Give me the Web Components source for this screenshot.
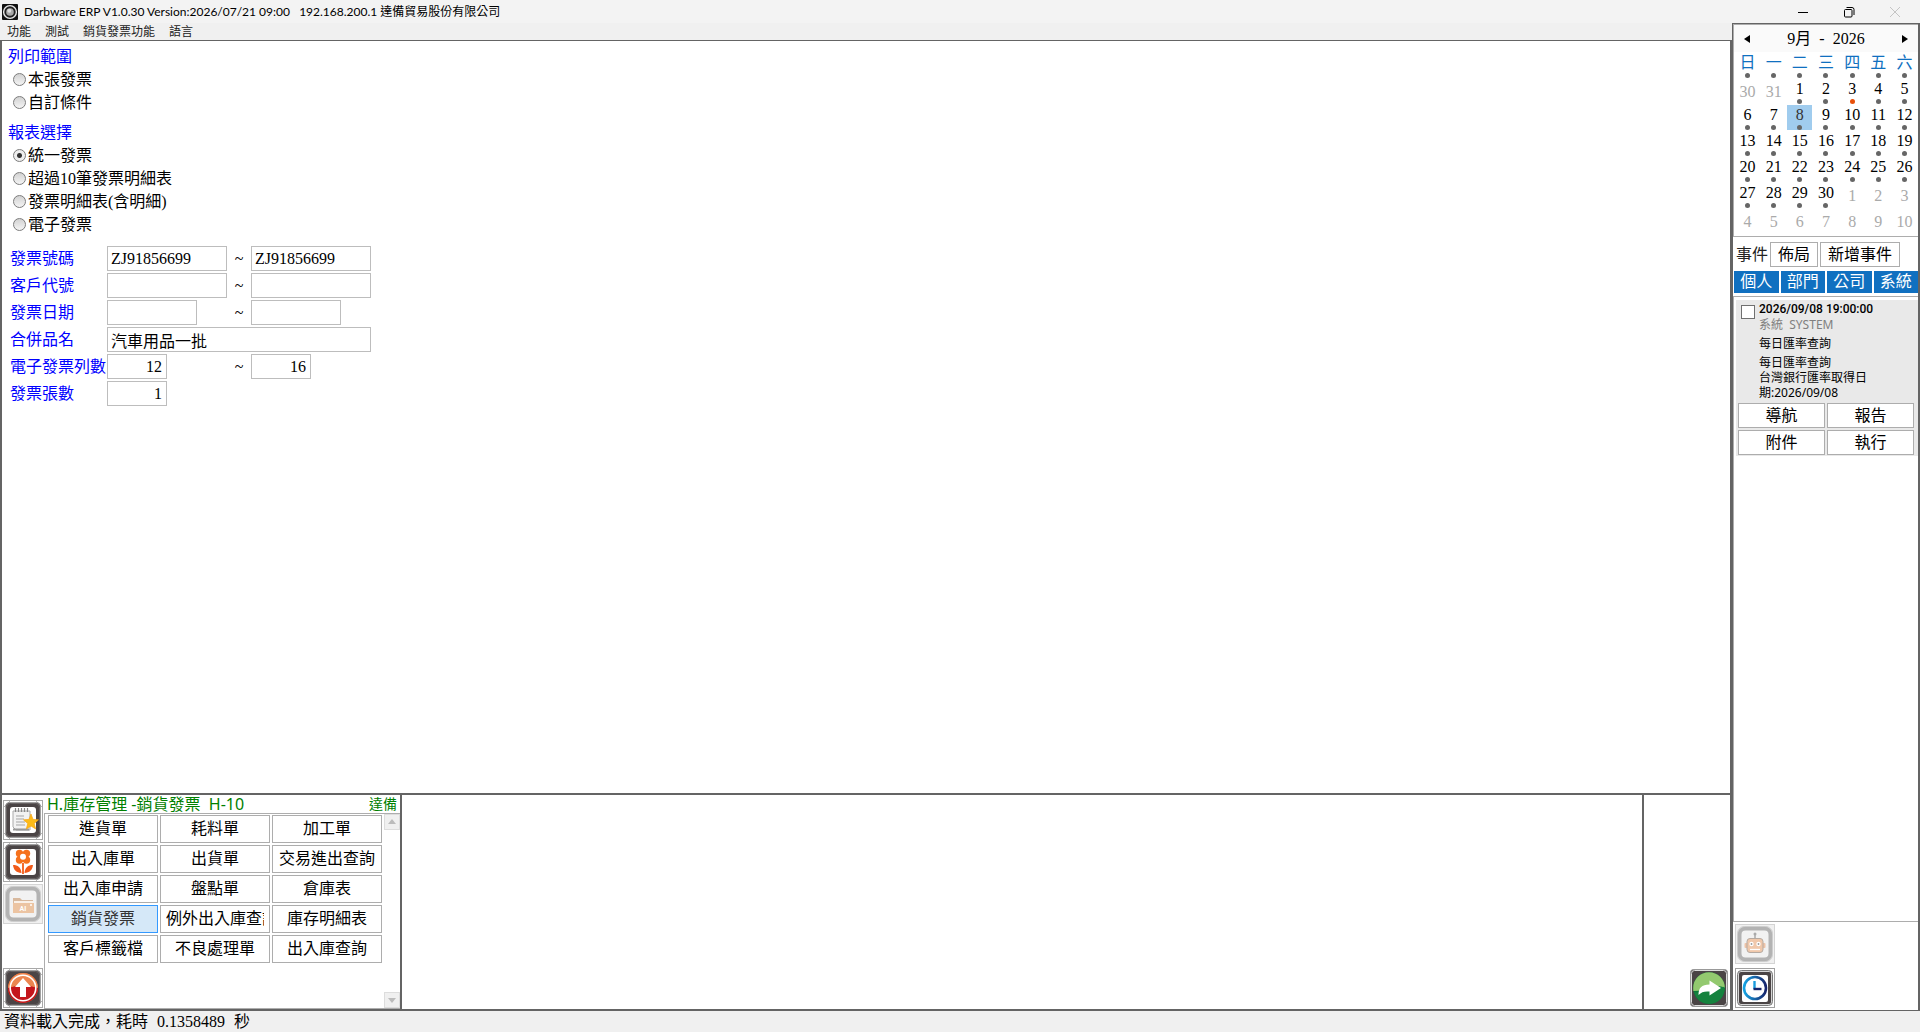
<!DOCTYPE html>
<html lang="zh-Hant">
<head>
<meta charset="utf-8">
<title>Darbware ERP</title>
<style>
  html, body {height: 100%; margin: 0;}
  body {
    --ming: "Liberation Serif", "Noto Sans CJK TC", serif;
    --ui: "Noto Sans", "Noto Sans CJK TC", sans-serif;
    --line: #646464;
    --edge: #adadad;
    --chrome: #f0f0f0;
    background: #fff;
    color: #000;
    font: 400 16px/20px var(--ming);
    overflow: hidden;
  }
</style>
</head>
<body>
<erp-app></erp-app>

<script>
// Attaches an open shadow root filled with the given markup
function shadow(el, html) {
  const template = document.createElement('template');
  template.innerHTML = `<style>* {box-sizing: border-box;} button, input {font: inherit; color: inherit;}</style>${html}`;
  el.attachShadow({mode: 'open'});
  el.shadowRoot.appendChild(template.content.cloneNode(true));
}

///////////////////
// Icons
const darkFrame = `
  <rect x=".5" y=".5" width="39" height="39" fill="#fff" stroke="#a8a8a8"/>
  <path d="M1 7L7 1M33 1L39 7M1 33L7 39M33 39L39 33" stroke="#b8b8b8" stroke-width="1"/>
  <rect x="2.5" y="2.5" width="35" height="35" rx="4" fill="#4a4445" stroke="#a0a0a0"/>
  <rect x="3.5" y="3.5" width="33" height="33" rx="4" fill="none" stroke="#666162"/>`;
const paleFrame = `
  <rect x=".5" y=".5" width="39" height="39" fill="#f0f0f0" stroke="#d4d4d4"/>
  <rect x="4.5" y="4.5" width="31" height="31" rx="6" fill="#f2f2f2" stroke="#b3b3b3" stroke-width="4"/>
  <rect x="2.5" y="2.5" width="35" height="35" rx="7" fill="none" stroke="#cdcdcd"/>`;

const icons = {
  logo: `<rect width="16" height="16" rx="1" fill="#111"/>
    <circle cx="8" cy="8" r="6.4" fill="#222" stroke="#e8e8e8" stroke-width="1.4"/>
    <circle cx="8" cy="8" r="3.8" fill="#a9a9a9"/><circle cx="7.3" cy="6.8" r="2" fill="#dedede"/>`,
  note: `${darkFrame}<rect x="7" y="7" width="26" height="26" rx="3" fill="#fff"/>
    <path d="M10 11h17v19H13l-3-3z" fill="#f2f2f2" stroke="#aaa"/>
    <path d="M10 29.500h16" stroke="#999" stroke-width="2"/>
    <path d="M12.500 8v4M15.500 8v4M18.500 8v4M21.500 8v4M24.500 8v4" stroke="#888" stroke-width="1.2"/>
    <path d="M13 16h8M13 19h8M13 22h9M13 25h9" stroke="#a5a5a5"/>
    <path d="M28 14l2 5.400 5.500.4-4.300 3.700 1.500 5.500-4.700-3-4.700 3 1.500-5.500-4.300-3.700 5.500-.4z" fill="#fdbb18" stroke="#f6a313" stroke-width=".7"/>`,
  flower: `${darkFrame}<rect x="7" y="7" width="26" height="26" rx="3" fill="#fff"/>
    <g fill="#f5711c"><circle cx="16.500" cy="11.500" r="3.700"/><circle cx="23.500" cy="11.500" r="3.700"/>
    <circle cx="16.500" cy="18" r="3.700"/><circle cx="23.500" cy="18" r="3.700"/><rect x="15" y="10" width="10" height="10"/></g>
    <circle cx="20" cy="14.700" r="3" fill="#fff"/>
    <path d="M20 21v11" stroke="#f25c18" stroke-width="1.800"/>
    <path d="M10 23c5 0 8 2.500 8.500 8-5-.3-8-3-8.500-8zM30 23c-5 0-8 2.500-8.500 8 5-.3 8-3 8.500-8z" fill="#f15b1b"/>`,
  folder: `${paleFrame}<path d="M10 14h7l2 2h11v13H10z" fill="#d8b99e"/>
    <path d="M11 17h19v2H11z" fill="#faf1e8"/><path d="M10 19h21v10H10z" fill="#ecc4a2"/>
    <text x="20" y="27" text-anchor="middle" fill="#fff" font-family="Roboto" font-size="7" font-weight="700">AI</text>
    <circle cx="28" cy="21" r="1" fill="#fff"/>`,
  up: `${darkFrame}<circle cx="20" cy="20" r="15" fill="#e0541f"/>
    <path d="M5 20a15 15 0 0 1 30 0q-15-5-30 0z" fill="#ec8650"/><path d="M5 20q15-5 30 0a15 15 0 0 1-30 0z" fill="#c4161c"/>
    <circle cx="20" cy="20" r="12.800" fill="none" stroke="#fff" stroke-width="1.600"/>
    <path d="M20 10l8 9h-5v10h-6V19h-5z" fill="#fff"/>`,
  go: `<rect x="1.500" y="1.500" width="37" height="37" rx="3" fill="#4a4445" stroke="#999"/>
    <rect x="2.500" y="2.500" width="35" height="35" rx="3" fill="none" stroke="#dcdcdc"/>
    <circle cx="20" cy="20" r="15.800" fill="#087c38"/>
    <path d="M4.200 20a15.800 15.800 0 0 1 31.600 0q-5-3-11-1-10 4-20.500 4z" fill="#93c96f"/>
    <path d="M5 24q10 2 18-4 5-2 12.500-1v3q-2 13-15.500 14-12-1-15-12z" fill="#15823e"/>
    <path d="M9.500 27c0-7 3-10.500 11-10.500V12.500L32 20l-11.500 7.500v-4c-5-.5-8 .5-11 3.500z" fill="#fff"/>`,
  robot: `${paleFrame}<path d="M20 10v5" stroke="#aaa" stroke-width="1.500"/><circle cx="20" cy="10" r="1.500" fill="#aaa"/>
    <rect x="9.500" y="19" width="21" height="5" rx="1" fill="#efc4a8"/>
    <rect x="12" y="14.500" width="16" height="14" rx="3" fill="#f0c8ab" stroke="#b5aaa2"/>
    <circle cx="16.500" cy="20" r="2.200" fill="#fff"/><circle cx="23.500" cy="20" r="2.200" fill="#fff"/>
    <circle cx="16.500" cy="20" r=".9" fill="#999"/><circle cx="23.500" cy="20" r=".9" fill="#999"/>
    <path d="M15 25.500h10" stroke="#fff" stroke-width="1.300"/>`,
  clock: `<rect x=".5" y=".5" width="39" height="39" fill="#fff" stroke="#a0a0a0"/>
    <rect x="2.500" y="2.500" width="35" height="35" rx="4" fill="#d5d5d5" stroke="#777"/>
    <rect x="4" y="4" width="32" height="32" rx="2" fill="#4a4445"/><rect x="7" y="7" width="26" height="27" rx="2" fill="#fff"/>
    <defs><linearGradient id="ring"><stop offset="0" stop-color="#16a4e4"/><stop offset="1" stop-color="#17246b"/></linearGradient></defs>
    <circle cx="20" cy="20" r="11" fill="none" stroke="url(#ring)" stroke-width="2.600"/>
    <path d="M19.500 13v8" stroke="#1b9cdc" stroke-width="2.400"/><path d="M18.500 21h8" stroke="#17246b" stroke-width="2.400"/>`,
  minimize: `<path d="M3 8.500h10" stroke="#000"/>`,
  restore: `<path d="M5.500 3.500H11a2 2 0 0 1 2 2V11" fill="none" stroke="#000"/><rect x="3.500" y="5.500" width="7.500" height="7.500" rx="1" fill="none" stroke="#000"/>`,
  close: `<path d="M3 3l10 10M13 3L3 13" stroke="#c4c4c4"/>`,
  left: `<path d="M11 4v8L5 8z"/>`,
  right: `<path d="M5 4v8l6-4z"/>`,
  scrollUp: `<path d="M4 10h8L8 5z" fill="#bcbcbc"/>`,
  scrollDown: `<path d="M4 6h8l-4 5z" fill="#bcbcbc"/>`
};

class IconButton extends HTMLElement {
  constructor() {
    super();
    const name = this.getAttribute('name');
    const size = ['note', 'flower', 'folder', 'up', 'go', 'robot', 'clock'].includes(name) ? 40 : 16;
    shadow(this, `
      <style>
        :host {display: block; flex: none; width: ${size}px; height: ${size}px;}
        button {display: block; padding: 0; border: 0; background: none;}
        svg {display: block;}
      </style>
      <button aria-label="${name}"><svg width="${size}" height="${size}" viewBox="0 0 ${size} ${size}">${icons[name]}</svg></button>`);
  }
}

///////////////////
// Title bar and menu
class TitleBar extends HTMLElement {
  constructor() {
    super();
    shadow(this, `
      <style>
        :host {display: flex; align-items: center; height: 23px; padding: 0 17px 0 2px; background: #f3f3f3; font: 400 12px/20px Lato, var(--ui);}
        .title {flex: 1; margin-left: 6px; white-space: pre;}
        .buttons {display: flex; gap: 30px;}
      </style>
      <icon-button name="logo"></icon-button>
      <span class="title"><slot></slot></span>
      <div class="buttons">
        <icon-button name="minimize"></icon-button>
        <icon-button name="restore"></icon-button>
        <icon-button name="close"></icon-button>
      </div>`);
  }
}

class MenuBar extends HTMLElement {
  constructor() {
    super();
    shadow(this, `
      <style>
        :host {display: flex; gap: 14px; height: 17px; padding-left: 7px; background: var(--chrome);}
        button {padding: 0; border: 0; background: none; color: #222; font: 400 12px/17px var(--ui);}
      </style>
      ${this.getAttribute('items').split(',').map(t => `<button>${t}</button>`).join('')}`);
  }
}

///////////////////
// Invoice print form
class RadioGroup extends HTMLElement {
  constructor() {
    super();
    const checked = this.getAttribute('checked');
    shadow(this, `
      <style>
        :host {display: block;}
        fieldset {margin: 0; padding: 0; border: 0;}
        legend {padding: 0; color: #00f; line-height: 22px;}
        label {display: flex; align-items: center; gap: 2px; height: 23px; padding-left: 5px;}
        input {
          appearance: none; width: 13px; height: 13px; margin: 0;
          border: 1px solid #7c7c7c; border-radius: 50%;
          background: linear-gradient(#d2d2d2, #f4f4f4);
        }
        input:checked {background: radial-gradient(circle, #333 0 2px, #eee 3px);}
      </style>
      <fieldset>
        <legend><slot></slot></legend>
        ${this.getAttribute('options').split(',').map(t =>
          `<label><input type="radio" name="choice" ${t === checked ? 'checked' : ''}>${t}</label>`).join('')}
      </fieldset>`);
  }
}

class FormRow extends HTMLElement {
  constructor() {
    super();
    const kind = this.getAttribute('kind');
    const from = this.getAttribute('from') || '';
    const to = this.getAttribute('to');
    shadow(this, `
      <style>
        :host {display: grid; grid-template-columns: 97px 120px 24px 120px; align-items: center; height: 27px;}
        label {color: #00f; white-space: nowrap;}
        span {text-align: center;}
        input {width: 120px; height: 25px; padding: 0 3px; border: 1px solid #bdbdbd; border-radius: 0; background: #fff;}
        .date {width: 90px;}
        .number {width: 60px; padding-right: 4px; text-align: right;}
        .wide {grid-column: span 3; width: 264px;}
      </style>
      <label for="from"><slot></slot></label>
      <input id="from" class="${kind}" value="${from}">
      ${to === null ? '' : `<span>~</span><input class="${kind}" value="${to}" aria-label="~">`}`);
  }
}

class InvoiceForm extends HTMLElement {
  constructor() {
    super();
    shadow(this, `
      <style>
        :host {display: block; padding: 5px 6px;}
        .groups {display: grid; gap: 8px; margin-bottom: 9px;}
        .rows {padding-left: 2px;}
      </style>
      <div class="groups">
        <radio-group options="本張發票,自訂條件">列印範圍</radio-group>
        <radio-group options="統一發票,超過10筆發票明細表,發票明細表(含明細),電子發票" checked="統一發票">報表選擇</radio-group>
      </div>
      <div class="rows">
        <form-row kind="code" from="ZJ91856699" to="ZJ91856699">發票號碼</form-row>
        <form-row kind="code" to="">客戶代號</form-row>
        <form-row kind="date" to="">發票日期</form-row>
        <form-row kind="wide" from="汽車用品一批">合併品名</form-row>
        <form-row kind="number" from="12" to="16">電子發票列數</form-row>
        <form-row kind="number" from="1">發票張數</form-row>
      </div>`);
  }
}

///////////////////
// Module dock under the form
class ModuleDock extends HTMLElement {
  constructor() {
    super();
    const items = ['進貨單', '耗料單', '加工單', '出入庫單', '出貨單', '交易進出查詢', '出入庫申請', '盤點單', '倉庫表',
      '銷貨發票', '例外出入庫查詢', '庫存明細表', '客戶標籤檔', '不良處理單', '出入庫查詢'];
    shadow(this, `
      <style>
        :host {display: flex; height: 218px; border: solid var(--line); border-width: 2px 0;}
        .tools {display: flex; flex-direction: column; gap: 2px; width: 42px; padding: 5px 0 1px 1px;}
        .tools :last-child {margin-top: auto;}
        .modules {display: flex; flex-direction: column; width: 356px;}
        header {display: flex; justify-content: space-between; padding: 0 3px; color: #008000; font: 400 16px/18px var(--ui); white-space: pre;}
        header small {font-size: 14px;}
        .list {flex: 1; display: flex; border: solid var(--edge); border-width: 1px 0 1px 1px;}
        .grid {flex: 1; display: grid; grid-template-columns: repeat(3, 110px); grid-auto-rows: 28px; gap: 2px; align-content: start; padding: 1px 0 0 3px;}
        .grid button {overflow: hidden; padding: 0 5px; border: 1px solid var(--edge); background: #fff; white-space: nowrap;}
        .grid span {display: block; overflow: hidden;}
        .grid .active {border-color: #3399ff; background: #d5e8f8; color: #333;}
        .scroll {display: flex; flex-direction: column; justify-content: space-between; width: 16px;}
        .scroll icon-button {background: var(--chrome); outline: 1px solid #ddd; outline-offset: -1px;}
        .pane {flex: 1; border-left: 2px solid var(--line);}
        .action {display: flex; align-items: flex-end; justify-content: flex-end; width: 88px; padding: 0 1px 1px 0; border-left: 2px solid var(--line);}
      </style>
      <nav class="tools">
        <icon-button name="note"></icon-button>
        <icon-button name="flower"></icon-button>
        <icon-button name="folder"></icon-button>
        <icon-button name="up"></icon-button>
      </nav>
      <section class="modules">
        <header><span>H.庫存管理 -銷貨發票  H-10</span><small>達備</small></header>
        <div class="list">
          <div class="grid">${items.map(t => `<button class="${t === '銷貨發票' ? 'active' : ''}"><span>${t}</span></button>`).join('')}</div>
          <div class="scroll"><icon-button name="scrollUp"></icon-button><icon-button name="scrollDown"></icon-button></div>
        </div>
      </section>
      <div class="pane"></div>
      <div class="action"><icon-button name="go"></icon-button></div>`);
  }
}

///////////////////
// Calendar
class MonthCalendar extends HTMLElement {
  constructor() {
    super();
    // September 2026 starts on a Tuesday
    let rows = '';
    for (let week = 0; week < 6; week++) {
      rows += '<tr>';
      for (let day = 0; day < 7; day++) {
        const n = week * 7 + day - 1;
        const other = n < 1 || n > 30;
        const label = n < 1 ? n + 31 : n > 30 ? n - 30 : n;
        const cls = other ? 'other' : n === 8 ? 'today' : n === 3 ? 'event' : '';
        rows += `<td><button class="${cls}">${label}</button></td>`;
      }
      rows += '</tr>';
    }
    shadow(this, `
      <style>
        :host {display: block; height: 213px; border: solid var(--edge); border-width: 1px 0 1px 1px;}
        header {display: flex; align-items: center; justify-content: space-between; height: 27px; padding: 0 5px; background: #fafafa;}
        header span {white-space: pre;}
        table {width: 100%; padding: 1px 0 0 1px; border-spacing: 0; table-layout: fixed;}
        th, td {height: 26px; padding: 0 1px 1px 0; font-weight: inherit; text-align: center;}
        button, th div {
          display: flex; flex-direction: column; align-items: center; justify-content: space-between;
          width: 100%; height: 25px; padding: 0; border: 0; background: none; line-height: 20px;
        }
        th div {color: #1070c0;}
        button::after, th div::after {content: ""; width: 5px; height: 5px; border-radius: 50%; background: #666;}
        .event::after {background: #e8500a;}
        .other {justify-content: center; color: #aaa;}
        .other::after {content: none;}
        .today {background: #a0ccee; color: #333;}
      </style>
      <header><icon-button name="left"></icon-button><span>9月  -  2026</span><icon-button name="right"></icon-button></header>
      <table>
        <thead><tr>${[...'日一二三四五六'].map(t => `<th><div>${t}</div></th>`).join('')}</tr></thead>
        <tbody>${rows}</tbody>
      </table>`);
  }
}

///////////////////
// One reminder with its actions
class EventCard extends HTMLElement {
  constructor() {
    super();
    shadow(this, `
      <style>
        :host {display: block; padding: 1px 4px 1px 2px; background: #e9e9e9;}
        .text {display: grid; grid-template-columns: 14px 1fr; column-gap: 4px; align-content: start; height: 102px; padding: 1px 3px 0; font: 400 12px/15px var(--ui);}
        input {appearance: none; grid-row: span 2; width: 14px; height: 14px; margin: 3px 0 0; border: 1px solid #707070; background: #fff;}
        label {color: #000; font-family: Roboto; font-weight: 500;}
        p {grid-column: 2; margin: 0;}
        .from {color: #808080;}
        .gap {margin-top: 4px;}
        .actions {display: grid; grid-template-columns: 1fr 1fr; grid-auto-rows: 25px; gap: 2px;}
        .actions button {padding: 0; border: 1px solid var(--edge); background: #fff;}
      </style>
      <div class="text">
        <input type="checkbox" id="done"><label for="done">2026/09/08 19:00:00</label>
        <p class="from">系統&nbsp; SYSTEM</p>
        <p class="gap">每日匯率查詢</p>
        <p class="gap">每日匯率查詢<br>台灣銀行匯率取得日<br>期:2026/09/08</p>
      </div>
      <div class="actions"><button>導航</button><button>報告</button><button>附件</button><button>執行</button></div>`);
  }
}

class SideBar extends HTMLElement {
  constructor() {
    super();
    shadow(this, `
      <style>
        :host {display: flex; flex-direction: column; width: 188px; box-sizing: border-box; border: 2px solid var(--line); border-width: 1px 2px 1px 1px;}
        .bar {display: flex; align-items: center; gap: 2px; padding: 5px 0 4px 3px;}
        .bar button {height: 25px; padding: 0 7px; border: 1px solid var(--edge); background: #fff;}
        .bar span {color: #222;}
        .tabs {display: grid; grid-template-columns: repeat(4, 1fr); gap: 2px; padding: 0 0 3px 1px;}
        .tabs button {height: 22px; padding: 0; border: 0; background: #1070c0; color: #fff;}
        .list {flex: 1; padding: 3px 0 0 2px; border: solid var(--edge); border-width: 1px 0 1px 1px;}
        .tools {display: grid; gap: 4px; padding: 2px 0 2px 2px;}
      </style>
      <month-calendar></month-calendar>
      <div class="bar"><span>事件</span><button>佈局</button><button>新增事件</button></div>
      <div class="tabs"><button>個人</button><button>部門</button><button>公司</button><button>系統</button></div>
      <div class="list"><event-card></event-card></div>
      <div class="tools"><icon-button name="robot"></icon-button><icon-button name="clock"></icon-button></div>`);
  }
}

///////////////////
// Whole window
class ErpApp extends HTMLElement {
  constructor() {
    super();
    shadow(this, `
      <style>
        :host {display: flex; flex-direction: column; height: 100vh;}
        .body {flex: 1; display: flex; min-height: 0;}
        .work {flex: 1; display: flex; flex-direction: column; background: var(--chrome);}
        .frame {flex: 1; display: flex; flex-direction: column; border: solid var(--line); border-width: 1px 2px 0; background: #fff;}
        invoice-form {flex: 1;}
        footer {display: flex; gap: 9px; height: 21px; padding-left: 4px; background: var(--chrome); line-height: 21px;}
      </style>
      <title-bar>Darbware ERP V1.0.30 Version:2026/07/21 09:00   192.168.200.1 達備貿易股份有限公司</title-bar>
      <div class="body">
        <div class="work">
          <menu-bar items="功能,測試,銷貨發票功能,語言"></menu-bar>
          <main class="frame">
            <invoice-form></invoice-form>
            <module-dock></module-dock>
          </main>
        </div>
        <side-bar></side-bar>
      </div>
      <footer><span>資料載入完成，耗時</span><span>0.1358489</span><span>秒</span></footer>`);
  }
}

window.customElements.define('icon-button', IconButton);
window.customElements.define('title-bar', TitleBar);
window.customElements.define('menu-bar', MenuBar);
window.customElements.define('radio-group', RadioGroup);
window.customElements.define('form-row', FormRow);
window.customElements.define('invoice-form', InvoiceForm);
window.customElements.define('module-dock', ModuleDock);
window.customElements.define('month-calendar', MonthCalendar);
window.customElements.define('event-card', EventCard);
window.customElements.define('side-bar', SideBar);
window.customElements.define('erp-app', ErpApp);
</script>
</body>
</html>
